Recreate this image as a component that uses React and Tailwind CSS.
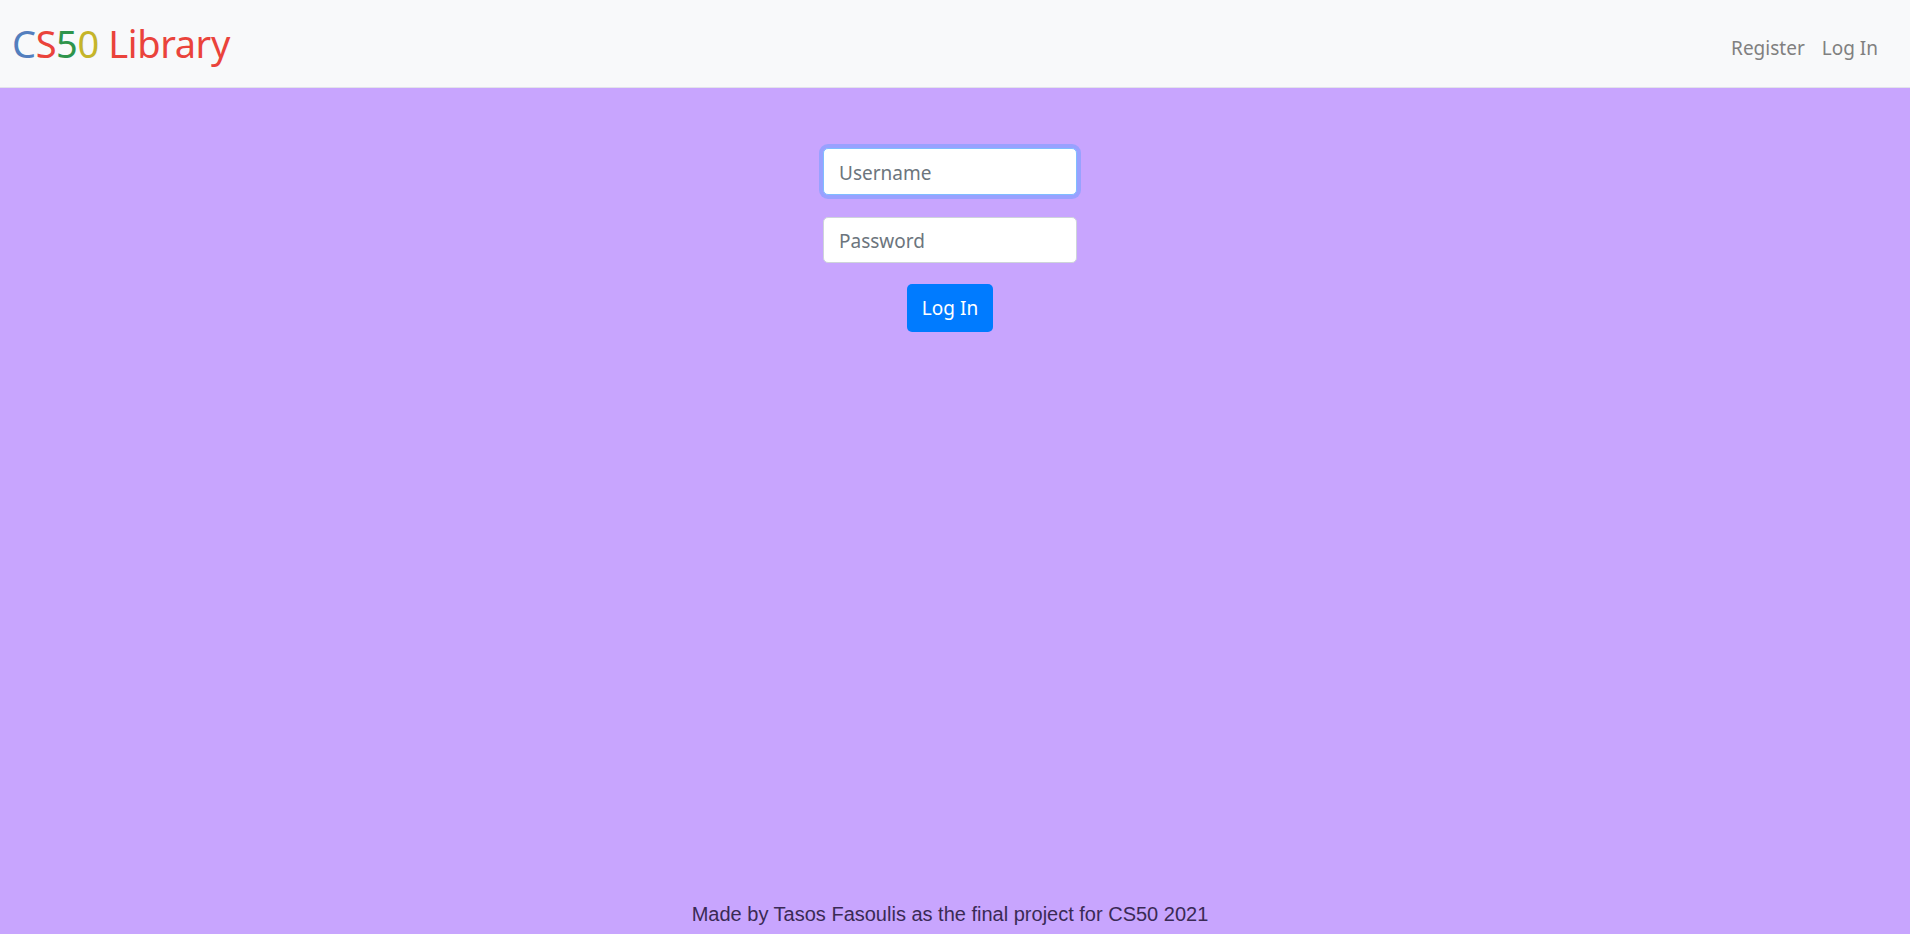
import React from "react";

const sans = { fontFamily: '"Noto Sans", "Open Sans", sans-serif' };

const App = () => {
  return (
    <div className="min-h-screen flex flex-col bg-[#c8a5fe]" style={sans}>
      <nav className="h-[88px] flex items-center justify-between bg-[#f8f9fa] border-b border-[#e3e3ea] pl-[12px] pr-[32px]">
        <a href="#" className="text-[38px] leading-none tracking-[-0.4px] pb-[2px]">
          <span className="text-[#537fbe]">C</span>
          <span className="text-[#ea433b]">S</span>
          <span className="text-[#2e944b]">5</span>
          <span className="text-[#c5b52a]">0</span>
          <span className="text-[#ea433b]"> Library</span>
        </a>
        <ul className="flex items-center gap-[17px] text-[19px] text-[#808080] pt-[9px]">
          <li>
            <a href="#">Register</a>
          </li>
          <li>
            <a href="#">Log In</a>
          </li>
        </ul>
      </nav>

      <main className="flex-1 flex flex-col items-center pt-[60px] pr-[10px]">
        <form className="flex flex-col items-center" onSubmit={(e) => e.preventDefault()}>
          <input
            autoFocus
            type="text"
            placeholder="Username"
            className="w-[254px] h-[47px] px-[15px] pt-[2px] rounded-[5px] bg-white border border-[#80bdff] text-[19px] text-[#495057] placeholder:text-[#6c757d] outline-none ring-4 ring-[#99a1ff]"
          />
          <input
            type="password"
            placeholder="Password"
            className="mt-[22px] w-[254px] h-[46px] px-[15px] pt-[2px] rounded-[5px] bg-white border border-[#ced4da] text-[19px] text-[#495057] placeholder:text-[#6c757d] outline-none"
          />
          <button
            type="submit"
            className="mt-[21px] h-[48px] px-[15px] rounded-[5px] bg-[#007bff] text-white text-[19px]"
          >
            Log In
          </button>
        </form>
      </main>

      <footer
        className="text-center text-[20px] leading-[30px] text-[#3a2a55] pb-[5px] pr-[10px]"
        style={{ fontFamily: '"Liberation Sans", Arial, sans-serif' }}
      >
        Made by Tasos Fasoulis as the final project for CS50 2021
      </footer>
    </div>
  );
};

export default App;
